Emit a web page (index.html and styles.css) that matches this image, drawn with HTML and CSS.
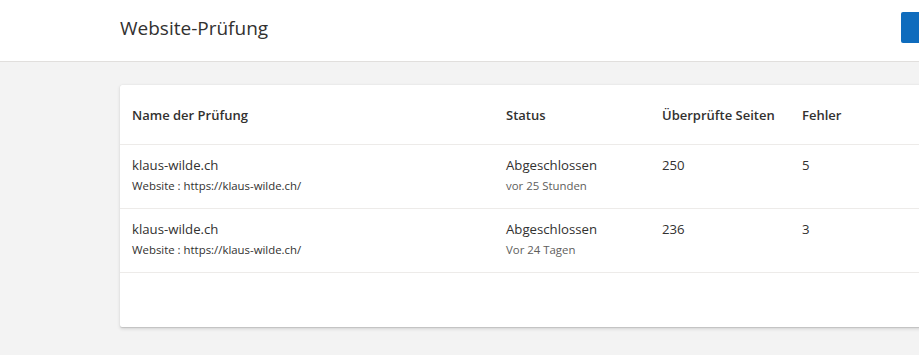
FILE: index.html
```html
<!DOCTYPE html>
<html lang="de">
<head>
  <meta charset="UTF-8" />
  <title>Website-Prüfung</title>
  <meta name="viewport" content="width=device-width, initial-scale=1.0" />
  <link rel="stylesheet" href="styles.css">
</head>
<body>
  <header class="topbar">
    <h1>Website-Prüfung</h1>
    <button class="primary-btn" type="button" aria-label="Neue Prüfung"></button>
  </header>

  <main class="content">
    <section class="card">
      <table class="audits">
        <thead>
          <tr>
            <th class="col-name">Name der Prüfung</th>
            <th class="col-status">Status</th>
            <th class="col-pages">Überprüfte Seiten</th>
            <th class="col-errors">Fehler</th>
          </tr>
        </thead>
        <tbody>
          <tr>
            <td>
              <div class="main-line">klaus-wilde.ch</div>
              <div class="sub-line">Website : https://klaus-wilde.ch/</div>
            </td>
            <td>
              <div class="main-line">Abgeschlossen</div>
              <div class="sub-line muted">vor 25 Stunden</div>
            </td>
            <td><div class="main-line">250</div></td>
            <td><div class="main-line">5</div></td>
          </tr>
          <tr>
            <td>
              <div class="main-line">klaus-wilde.ch</div>
              <div class="sub-line">Website : https://klaus-wilde.ch/</div>
            </td>
            <td>
              <div class="main-line">Abgeschlossen</div>
              <div class="sub-line muted">Vor 24 Tagen</div>
            </td>
            <td><div class="main-line">236</div></td>
            <td><div class="main-line">3</div></td>
          </tr>
        </tbody>
      </table>
    </section>
  </main>
</body>
</html>
```

FILE: styles.css
```css
* {
  box-sizing: border-box;
  margin: 0;
  padding: 0;
}

body {
  font-family: 'Segoe UI', 'Open Sans', sans-serif;
  background: #f3f3f3;
  color: #323130;
  overflow: hidden;
  min-height: 100vh;
}

.topbar {
  background: #fff;
  height: 62px;
  border-bottom: 1px solid #e1dfdd;
  display: flex;
  align-items: center;
  justify-content: space-between;
  padding-left: 120px;
}

.topbar h1 {
  font-size: 19px;
  font-weight: 400;
  line-height: 28px;
  margin-top: -6px;
}

.primary-btn {
  width: 120px;
  height: 31px;
  margin-right: -102px;
  margin-top: -6px;
  border: none;
  border-radius: 2px;
  background: #0f6cbd;
}

.content {
  padding: 23px 0 0 120px;
}

.card {
  width: 880px;
  background: #fff;
  border-radius: 2px;
  box-shadow: 0 1.6px 3.6px rgba(0, 0, 0, 0.13), 0 0.3px 0.9px rgba(0, 0, 0, 0.11);
  padding-bottom: 54px;
}

.audits {
  width: 100%;
  border-collapse: collapse;
  table-layout: fixed;
}

.audits th {
  text-align: left;
  white-space: nowrap;
  font-size: 13px;
  font-weight: 600;
  line-height: 20px;
  padding: 20px 12px 19px;
  border-bottom: 1px solid #edebe9;
}

.col-name { width: 374px; }
.col-status { width: 156px; }
.col-pages { width: 140px; }

.audits td {
  vertical-align: top;
  padding: 10px 12px 12px;
  border-bottom: 1px solid #edebe9;
}

.main-line {
  font-size: 13.2px;
  line-height: 20px;
}

.sub-line {
  font-size: 11.4px;
  line-height: 21px;
}

.muted {
  color: #605e5c;
}
```
